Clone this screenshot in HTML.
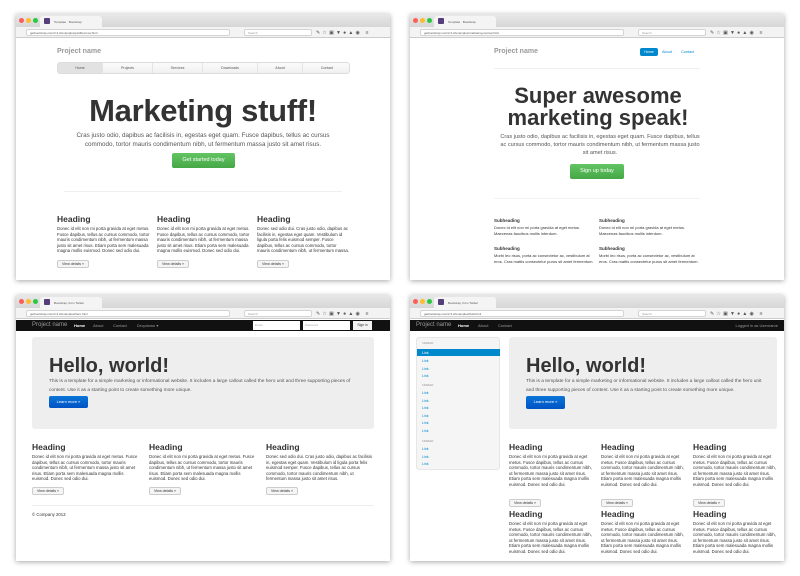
<!DOCTYPE html>
<html><head><meta charset="utf-8">
<style>
*{margin:0;padding:0;box-sizing:border-box}
body{width:800px;height:576px;background:#fff;position:relative;overflow:hidden;font-family:"Liberation Sans",sans-serif;color:#333}
.win{position:absolute;width:374px;height:266px;background:#fff;box-shadow:0 1px 5px rgba(0,0,0,.35);overflow:hidden}
.tabs{position:absolute;left:0;top:0;width:100%;height:13px;background:linear-gradient(#e8e8e8,#d6d6d6)}
.dot{position:absolute;top:4px;width:5px;height:5px;border-radius:50%}
.tab{position:absolute;left:24px;top:2px;width:62px;height:11px;background:#f4f4f4;border-radius:3px 3px 0 0;font-size:3px;color:#555;padding:4px 0 0 14px}
.fav{position:absolute;left:4px;top:2px;width:6px;height:6px;background:#563d7c;border-radius:1px}
.url{position:absolute;left:0;top:13px;width:100%;height:11px;background:#f3f3f3;border-bottom:1px solid #ccc}
.ub{position:absolute;left:10px;top:2px;width:204px;height:7px;background:#fff;border:1px solid #d4d4d4;border-radius:2px;font-size:3px;color:#555;padding:1px 3px}
.sb{position:absolute;left:228px;top:2px;width:68px;height:7px;background:#fff;border:1px solid #d4d4d4;border-radius:2px;font-size:3px;color:#999;padding:1px 3px}
.ic{position:absolute;top:3px;font-size:5px;color:#555;letter-spacing:2.2px;left:300px}
.c{position:absolute;left:0;top:24px;width:100%;bottom:0}
.a{position:absolute}
.sm{font-size:4.3px;line-height:5.6px;color:#333}
.h{font-weight:bold;color:#333}
.vd{position:absolute;width:32px;height:8px;border:1px solid #ccc;background:#f5f5f5;border-radius:2px;font-size:3.6px;line-height:6px;text-align:center}
.nav{background:#111;height:11px;width:100%;position:absolute;left:0;top:0}
.nl{position:absolute;top:3px;font-size:4px;color:#999}
.jb{position:absolute;background:#eee;border-radius:3px}
.btnb{position:absolute;background:linear-gradient(#0a75d8,#0052c4);color:#fff;border-radius:2px;font-size:4px;text-align:center;line-height:12px}
</style></head><body>

<!-- Window 1 -->
<div class="win" style="left:16px;top:14px">
 <div class="tabs"><div class="dot" style="left:3px;background:#fc5f57"></div><div class="dot" style="left:10px;background:#fdbc2e"></div><div class="dot" style="left:17px;background:#29c840"></div><div class="tab"><div class="fav"></div>Template · Bootstrap</div></div>
 <div class="url"><div class="ub">getbootstrap.com/2.3.2/examples/justified-nav.html</div><div class="sb">Search</div><div class="ic">✎☆▣▼●▲◉ ≡</div></div>
 <div class="c">
  <div class="a h" style="left:41px;top:10px;font-size:7px;color:#999">Project name</div>
  <div class="a" style="left:41px;top:24px;width:293px;height:12px;border:1px solid #ddd;border-radius:3px;background:linear-gradient(#fbfbfb,#f0f0f0);font-size:3.6px;color:#555">
   <div class="a" style="left:0;top:0;width:44px;height:10px;background:#e2e2e2;text-align:center;line-height:10px">Home</div>
   <div class="a" style="left:44px;width:50px;text-align:center;line-height:10px;border-left:1px solid #e4e4e4">Projects</div>
   <div class="a" style="left:94px;width:50px;text-align:center;line-height:10px;border-left:1px solid #e4e4e4">Services</div>
   <div class="a" style="left:144px;width:55px;text-align:center;line-height:10px;border-left:1px solid #e4e4e4">Downloads</div>
   <div class="a" style="left:199px;width:45px;text-align:center;line-height:10px;border-left:1px solid #e4e4e4">About</div>
   <div class="a" style="left:244px;width:49px;text-align:center;line-height:10px;border-left:1px solid #e4e4e4">Contact</div>
  </div>
  <div class="a h" style="left:0;width:374px;top:55px;text-align:center;font-size:31px;letter-spacing:-.3px">Marketing stuff!</div>
  <div class="a" style="left:50px;width:274px;top:93px;text-align:center;font-size:6.3px;line-height:9px;color:#555">Cras justo odio, dapibus ac facilisis in, egestas eget quam. Fusce dapibus, tellus ac cursus commodo, tortor mauris condimentum nibh, ut fermentum massa justo sit amet risus.</div>
  <div class="a" style="left:156px;top:115px;width:63px;height:15px;background:linear-gradient(#62c462,#45a745);border-radius:2px;color:#fff;font-size:5.5px;text-align:center;line-height:15px">Get started today</div>
  <div class="a" style="left:48px;top:153px;width:278px;border-top:1px solid #eee"></div>
  <div class="a" style="left:41px;top:176px;width:93px"><div class="h" style="font-size:8.5px">Heading</div><div class="sm" style="margin-top:2px">Donec id elit non mi porta gravida at eget metus. Fusce dapibus, tellus ac cursus commodo, tortor mauris condimentum nibh, ut fermentum massa justo sit amet risus. Etiam porta sem malesuada magna mollis euismod. Donec sed odio dui.</div></div>
  <div class="vd" style="left:41px;top:222px">View details »</div>
  <div class="a" style="left:141px;top:176px;width:93px"><div class="h" style="font-size:8.5px">Heading</div><div class="sm" style="margin-top:2px">Donec id elit non mi porta gravida at eget metus. Fusce dapibus, tellus ac cursus commodo, tortor mauris condimentum nibh, ut fermentum massa justo sit amet risus. Etiam porta sem malesuada magna mollis euismod. Donec sed odio dui.</div></div>
  <div class="vd" style="left:141px;top:222px">View details »</div>
  <div class="a" style="left:241px;top:176px;width:93px"><div class="h" style="font-size:8.5px">Heading</div><div class="sm" style="margin-top:2px">Donec sed odio dui. Cras justo odio, dapibus ac facilisis in, egestas eget quam. Vestibulum id ligula porta felis euismod semper. Fusce dapibus, tellus ac cursus commodo, tortor mauris condimentum nibh, ut fermentum massa.</div></div>
  <div class="vd" style="left:241px;top:222px">View details »</div>
 </div>
</div>

<!-- Window 2 -->
<div class="win" style="left:410px;top:14px">
 <div class="tabs"><div class="dot" style="left:3px;background:#fc5f57"></div><div class="dot" style="left:10px;background:#fdbc2e"></div><div class="dot" style="left:17px;background:#29c840"></div><div class="tab"><div class="fav"></div>Template · Bootstrap</div></div>
 <div class="url"><div class="ub">getbootstrap.com/2.3.2/examples/marketing-narrow.html</div><div class="sb">Search</div><div class="ic">✎☆▣▼●▲◉ ≡</div></div>
 <div class="c">
  <div class="a h" style="left:84px;top:10px;font-size:7px;color:#999">Project name</div>
  <div class="a" style="left:230px;top:10px;width:18px;height:8px;background:#0088cc;border-radius:2px;color:#fff;font-size:3.6px;text-align:center;line-height:8px">Home</div>
  <div class="a" style="left:252px;top:12px;font-size:3.8px;color:#0088cc">About</div>
  <div class="a" style="left:271px;top:12px;font-size:3.8px;color:#0088cc">Contact</div>
  <div class="a" style="left:84px;top:30px;width:206px;border-top:1px solid #eee"></div>
  <div class="a h" style="left:0;width:376px;top:47px;text-align:center;font-size:22px;line-height:22px">Super awesome<br>marketing speak!</div>
  <div class="a" style="left:90px;width:200px;top:95px;text-align:center;font-size:5.6px;line-height:8px;color:#555">Cras justo odio, dapibus ac facilisis in, egestas eget quam. Fusce dapibus, tellus ac cursus commodo, tortor mauris condimentum nibh, ut fermentum massa justo sit amet risus.</div>
  <div class="a" style="left:160px;top:126px;width:54px;height:15px;background:linear-gradient(#62c462,#45a745);border-radius:2px;color:#fff;font-size:5.5px;text-align:center;line-height:15px">Sign up today</div>
  <div class="a" style="left:84px;top:160px;width:206px;border-top:1px solid #f2f2f2"></div>
  <div class="a" style="left:84px;top:180px;width:100px"><div class="h" style="font-size:4.5px">Subheading</div><div class="sm" style="margin-top:2px;font-size:4px">Donec id elit non mi porta gravida at eget metus. Maecenas faucibus mollis interdum.</div></div>
  <div class="a" style="left:189px;top:180px;width:100px"><div class="h" style="font-size:4.5px">Subheading</div><div class="sm" style="margin-top:2px;font-size:4px">Donec id elit non mi porta gravida at eget metus. Maecenas faucibus mollis interdum.</div></div>
  <div class="a" style="left:84px;top:208px;width:100px"><div class="h" style="font-size:4.5px">Subheading</div><div class="sm" style="margin-top:2px;font-size:4px">Morbi leo risus, porta ac consectetur ac, vestibulum at eros. Cras mattis consectetur purus sit amet fermentum.</div></div>
  <div class="a" style="left:189px;top:208px;width:100px"><div class="h" style="font-size:4.5px">Subheading</div><div class="sm" style="margin-top:2px;font-size:4px">Morbi leo risus, porta ac consectetur ac, vestibulum at eros. Cras mattis consectetur purus sit amet fermentum.</div></div>
 </div>
</div>

<!-- Window 3 -->
<div class="win" style="left:16px;top:295px">
 <div class="tabs"><div class="dot" style="left:3px;background:#fc5f57"></div><div class="dot" style="left:10px;background:#fdbc2e"></div><div class="dot" style="left:17px;background:#29c840"></div><div class="tab"><div class="fav"></div>Bootstrap, from Twitter</div></div>
 <div class="url"><div class="ub">getbootstrap.com/2.3.2/examples/hero.html</div><div class="sb">Search</div><div class="ic">✎☆▣▼●▲◉ ≡</div></div>
 <div class="c" style="top:25px">
  <div class="nav">
   <div class="nl" style="left:16px;top:2px;font-size:6px">Project name</div>
   <div class="nl" style="left:58px;color:#fff;font-weight:bold">Home</div>
   <div class="nl" style="left:77px">About</div>
   <div class="nl" style="left:97px">Contact</div>
   <div class="nl" style="left:121px">Dropdown ▾</div>
   <div class="a" style="left:237px;top:1px;width:47px;height:9px;background:#fff;font-size:3px;color:#aaa;padding:2px">Email</div>
   <div class="a" style="left:287px;top:1px;width:47px;height:9px;background:#fff;font-size:3px;color:#aaa;padding:2px">Password</div>
   <div class="a" style="left:337px;top:1px;width:19px;height:9px;background:#f2f2f2;font-size:3.4px;text-align:center;line-height:9px">Sign in</div>
  </div>
  <div class="jb" style="left:16px;top:17px;width:342px;height:92px"></div>
  <div class="a h" style="left:33px;top:35px;font-size:20px">Hello, world!</div>
  <div class="a" style="left:33px;top:57px;width:316px;font-size:4.8px;line-height:9px;color:#555">This is a template for a simple marketing or informational website. It includes a large callout called the hero unit and three supporting pieces of content. Use it as a starting point to create something more unique.</div>
  <div class="btnb" style="left:33px;top:76px;width:39px;height:12px">Learn more »</div>
  <div class="a" style="left:16px;top:122px;width:108px"><div class="h" style="font-size:8.5px">Heading</div><div class="sm" style="margin-top:2px">Donec id elit non mi porta gravida at eget metus. Fusce dapibus, tellus ac cursus commodo, tortor mauris condimentum nibh, ut fermentum massa justo sit amet risus. Etiam porta sem malesuada magna mollis euismod. Donec sed odio dui.</div></div>
  <div class="vd" style="left:16px;top:167px">View details »</div>
  <div class="a" style="left:133px;top:122px;width:108px"><div class="h" style="font-size:8.5px">Heading</div><div class="sm" style="margin-top:2px">Donec id elit non mi porta gravida at eget metus. Fusce dapibus, tellus ac cursus commodo, tortor mauris condimentum nibh, ut fermentum massa justo sit amet risus. Etiam porta sem malesuada magna mollis euismod. Donec sed odio dui.</div></div>
  <div class="vd" style="left:133px;top:167px">View details »</div>
  <div class="a" style="left:250px;top:122px;width:108px"><div class="h" style="font-size:8.5px">Heading</div><div class="sm" style="margin-top:2px">Donec sed odio dui. Cras justo odio, dapibus ac facilisis in, egestas eget quam. Vestibulum id ligula porta felis euismod semper. Fusce dapibus, tellus ac cursus commodo, tortor mauris condimentum nibh, ut fermentum massa justo sit amet risus.</div></div>
  <div class="vd" style="left:250px;top:167px">View details »</div>
  <div class="a" style="left:16px;top:185px;width:342px;border-top:1px solid #eee"></div>
  <div class="a sm" style="left:16px;top:192px">© Company 2013</div>
 </div>
</div>

<!-- Window 4 -->
<div class="win" style="left:410px;top:295px">
 <div class="tabs"><div class="dot" style="left:3px;background:#fc5f57"></div><div class="dot" style="left:10px;background:#fdbc2e"></div><div class="dot" style="left:17px;background:#29c840"></div><div class="tab"><div class="fav"></div>Bootstrap, from Twitter</div></div>
 <div class="url"><div class="ub">getbootstrap.com/2.3.2/examples/fluid.html</div><div class="sb">Search</div><div class="ic">✎☆▣▼●▲◉ ≡</div></div>
 <div class="c" style="top:25px">
  <div class="nav">
   <div class="nl" style="left:6px;top:2px;font-size:6px">Project name</div>
   <div class="nl" style="left:48px;color:#fff;font-weight:bold">Home</div>
   <div class="nl" style="left:68px">About</div>
   <div class="nl" style="left:88px">Contact</div>
   <div class="nl" style="right:6px">Logged in as Username</div>
  </div>
  <div class="a" style="left:6px;top:17px;width:84px;height:133px;background:#f5f5f5;border:1px solid #e6e6e6;border-radius:3px;font-size:3.6px;color:#0088cc">
   <div class="a" style="left:5px;top:4px;color:#999;font-size:2.6px">SIDEBAR</div>
   <div class="a" style="left:0;top:11px;width:83px;height:7px;background:#0088cc;color:#fff;padding:1.5px 5px">Link</div>
   <div class="a" style="left:5px;top:20px;line-height:7.6px">Link<br>Link<br>Link</div>
   <div class="a" style="left:5px;top:46px;color:#999;font-size:2.6px">SIDEBAR</div>
   <div class="a" style="left:5px;top:52px;line-height:7.6px">Link<br>Link<br>Link<br>Link<br>Link<br>Link</div>
   <div class="a" style="left:5px;top:102px;color:#999;font-size:2.6px">SIDEBAR</div>
   <div class="a" style="left:5px;top:108px;line-height:7.6px">Link<br>Link<br>Link</div>
  </div>
  <div class="jb" style="left:99px;top:17px;width:268px;height:92px"></div>
  <div class="a h" style="left:116px;top:35px;font-size:20px">Hello, world!</div>
  <div class="a" style="left:116px;top:57px;width:240px;font-size:4.8px;line-height:9px;color:#555">This is a template for a simple marketing or informational website. It includes a large callout called the hero unit and three supporting pieces of content. Use it as a starting point to create something more unique.</div>
  <div class="btnb" style="left:116px;top:76px;width:39px;height:13px">Learn more »</div>
  <div class="a" style="left:99px;top:122px;width:84px"><div class="h" style="font-size:8.5px">Heading</div><div class="sm" style="margin-top:2px">Donec id elit non mi porta gravida at eget metus. Fusce dapibus, tellus ac cursus commodo, tortor mauris condimentum nibh, ut fermentum massa justo sit amet risus. Etiam porta sem malesuada magna mollis euismod. Donec sed odio dui.</div></div>
  <div class="vd" style="left:99px;top:179px">View details »</div>
  <div class="a" style="left:191px;top:122px;width:84px"><div class="h" style="font-size:8.5px">Heading</div><div class="sm" style="margin-top:2px">Donec id elit non mi porta gravida at eget metus. Fusce dapibus, tellus ac cursus commodo, tortor mauris condimentum nibh, ut fermentum massa justo sit amet risus. Etiam porta sem malesuada magna mollis euismod. Donec sed odio dui.</div></div>
  <div class="vd" style="left:191px;top:179px">View details »</div>
  <div class="a" style="left:283px;top:122px;width:84px"><div class="h" style="font-size:8.5px">Heading</div><div class="sm" style="margin-top:2px">Donec id elit non mi porta gravida at eget metus. Fusce dapibus, tellus ac cursus commodo, tortor mauris condimentum nibh, ut fermentum massa justo sit amet risus. Etiam porta sem malesuada magna mollis euismod. Donec sed odio dui.</div></div>
  <div class="vd" style="left:283px;top:179px">View details »</div>
  <div class="a" style="left:99px;top:189px;width:84px"><div class="h" style="font-size:8.5px">Heading</div><div class="sm" style="margin-top:2px">Donec id elit non mi porta gravida at eget metus. Fusce dapibus, tellus ac cursus commodo, tortor mauris condimentum nibh, ut fermentum massa justo sit amet risus. Etiam porta sem malesuada magna mollis euismod. Donec sed odio dui.</div></div>
  <div class="a" style="left:191px;top:189px;width:84px"><div class="h" style="font-size:8.5px">Heading</div><div class="sm" style="margin-top:2px">Donec id elit non mi porta gravida at eget metus. Fusce dapibus, tellus ac cursus commodo, tortor mauris condimentum nibh, ut fermentum massa justo sit amet risus. Etiam porta sem malesuada magna mollis euismod. Donec sed odio dui.</div></div>
  <div class="a" style="left:283px;top:189px;width:84px"><div class="h" style="font-size:8.5px">Heading</div><div class="sm" style="margin-top:2px">Donec id elit non mi porta gravida at eget metus. Fusce dapibus, tellus ac cursus commodo, tortor mauris condimentum nibh, ut fermentum massa justo sit amet risus. Etiam porta sem malesuada magna mollis euismod. Donec sed odio dui.</div></div>
 </div>
</div>

</body></html>
